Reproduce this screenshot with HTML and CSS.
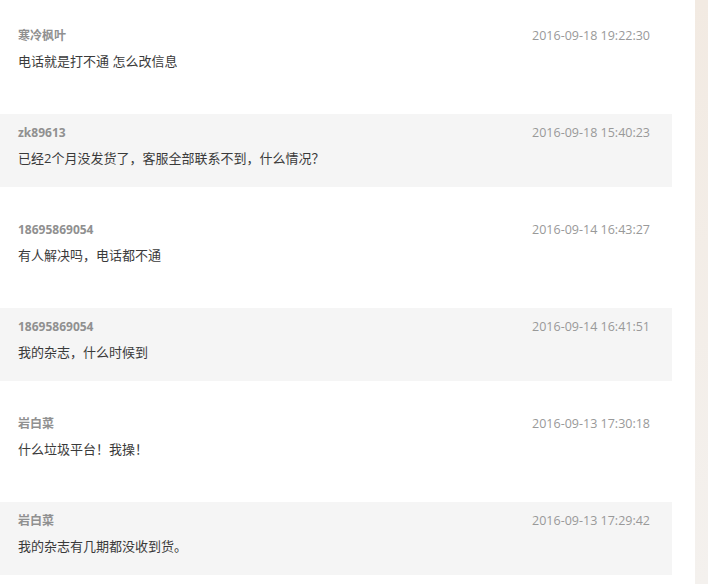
FILE: index.html
```html
<!DOCTYPE html>
<html lang="zh-CN">
<head>
    <meta charset="UTF-8">
    <meta name="viewport" content="width=device-width, initial-scale=1.0">
    <title>留言</title>
    <link rel="stylesheet" href="styles.css">
</head>
<body>
    <div class="page">
        <div class="comments">
            <div class="comment">
                <div class="comment-head">
                    <span class="user">寒冷枫叶</span>
                    <span class="time">2016-09-18 19:22:30</span>
                </div>
                <div class="content">电话就是打不通 怎么改信息</div>
            </div>
            <div class="comment alt">
                <div class="comment-head">
                    <span class="user">zk89613</span>
                    <span class="time">2016-09-18 15:40:23</span>
                </div>
                <div class="content">已经2个月没发货了，客服全部联系不到，什么情况？</div>
            </div>
            <div class="comment">
                <div class="comment-head">
                    <span class="user">18695869054</span>
                    <span class="time">2016-09-14 16:43:27</span>
                </div>
                <div class="content">有人解决吗，电话都不通</div>
            </div>
            <div class="comment alt">
                <div class="comment-head">
                    <span class="user">18695869054</span>
                    <span class="time">2016-09-14 16:41:51</span>
                </div>
                <div class="content">我的杂志，什么时候到</div>
            </div>
            <div class="comment">
                <div class="comment-head">
                    <span class="user">岩白菜</span>
                    <span class="time">2016-09-13 17:30:18</span>
                </div>
                <div class="content">什么垃圾平台！我操！</div>
            </div>
            <div class="comment alt">
                <div class="comment-head">
                    <span class="user">岩白菜</span>
                    <span class="time">2016-09-13 17:29:42</span>
                </div>
                <div class="content">我的杂志有几期都没收到货。</div>
            </div>
        </div>
        <div class="side"></div>
    </div>
</body>
</html>
```

FILE: styles.css
```css
body {
    margin: 0;
    background-color: #ffffff;
    font-family: "Open Sans", "Noto Sans CJK SC", sans-serif;
    overflow: hidden;
}

.page {
    display: flex;
    height: 584px;
}

.comments {
    width: 672px;
    padding-top: 17px;
    display: flex;
    flex-direction: column;
    gap: 24px;
}

.comment {
    height: 73px;
    box-sizing: border-box;
    padding: 10px 22px 0 18px;
}

.comment.alt {
    background-color: #f5f5f5;
}

.comment-head {
    display: flex;
    justify-content: space-between;
    align-items: center;
    height: 16px;
    margin-bottom: 9px;
}

.user {
    font-size: 12px;
    font-weight: bold;
    color: #909090;
}

.time {
    font-size: 12.5px;
    color: #999999;
}

.content {
    font-size: 13px;
    line-height: 18px;
    color: #3a3a3a;
}

.side {
    margin-left: 23px;
    flex: 1;
    background: linear-gradient(#f2eae2, #f4f1ee);
}
```
